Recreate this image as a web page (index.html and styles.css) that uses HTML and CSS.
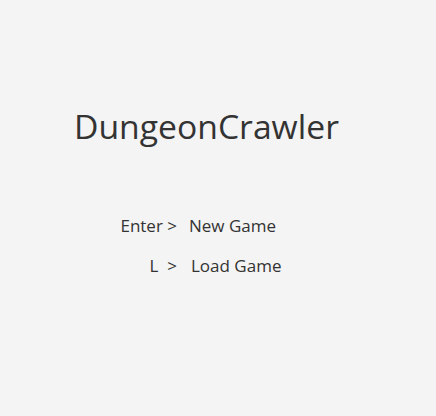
FILE: index.html
```html
<!DOCTYPE html>
<html>
<head>
<meta charset="utf-8">
<link rel="stylesheet" href="styles.css">
</head>
<body>
<div class="screen">
  <h1 class="title">DungeonCrawler</h1>
  <div class="menu">
    <span class="key">Enter &gt;</span><span class="action">New Game</span>
    <span class="key">L &nbsp;&gt;</span><span class="action load">Load Game</span>
  </div>
</div>
</body>
</html>
```
FILE: styles.css
```css
html, body {
  margin: 0;
  padding: 0;
  background: #f4f4f4;
}
.screen {
  width: 436px;
  height: 416px;
  font-family: "Open Sans", "Noto Sans", sans-serif;
  color: #333;
  padding-top: 100px;
  box-sizing: border-box;
}
.title {
  margin: 0 0 0 74px;
  font-weight: 400;
  font-size: 33.7px;
  line-height: 52px;
}
.menu {
  margin: 62px 0 0 0;
  display: grid;
  grid-template-columns: 177px auto;
  column-gap: 12px;
  row-gap: 17px;
  font-size: 17px;
  line-height: 23px;
}
.key {
  text-align: right;
}
.load {
  padding-left: 2px;
}
```
